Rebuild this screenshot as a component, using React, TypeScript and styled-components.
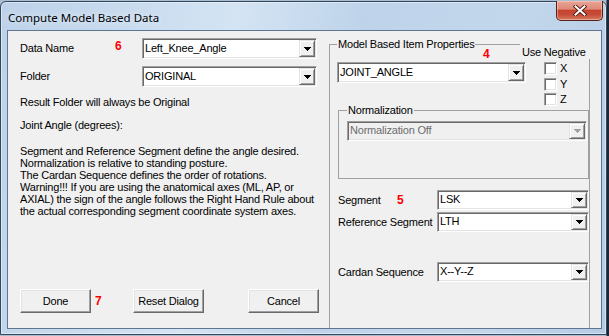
import React from 'react';
import styled, { createGlobalStyle } from 'styled-components';

const GlobalStyle = createGlobalStyle`
  html, body { margin: 0; padding: 0; }
  body {
    width: 609px;
    height: 336px;
    overflow: hidden;
    background: linear-gradient(to right, #a9bdd1 0, #a9bdd1 606px, #1b2838 607px);
    font-family: "Liberation Sans", Arial, sans-serif;
  }
  #root { width: 609px; height: 336px; }
`;

const Win = styled.div`
  position: relative;
  box-sizing: border-box;
  width: 607px;
  height: 334px;
  margin-top: 1px;
  border: 1px solid #34475c;
  border-radius: 6px 6px 0 0;
  background: linear-gradient(100deg, #bdd2e9 0%, #c7daee 18%, #d4e4f3 36%, #bed3ea 55%, #c3d7ec 78%, #b6cce5 100%);
  box-shadow: inset 0 0 0 1px rgba(255, 255, 255, 0.45);
  display: flex;
  flex-direction: column;
`;

const TitleBar = styled.div`
  height: 28px;
  flex: none;
  box-sizing: border-box;
  display: flex;
  align-items: center;
  padding: 2px 0 0 7px;
  font-family: "Noto Sans", "Open Sans", sans-serif;
  font-size: 11.5px;
  color: #000;
  text-shadow: 0 0 6px rgba(255, 255, 255, 0.9);
`;

const CloseButton = styled.div`
  position: absolute;
  top: -1px;
  right: 3px;
  width: 47px;
  height: 20px;
  box-sizing: border-box;
  border: 1px solid #5a1f16;
  border-top: none;
  border-radius: 0 0 5px 5px;
  background: linear-gradient(to bottom, #e9a596 0%, #de8a78 42%, #c7432f 50%, #c64c37 72%, #d77a62 100%);
  box-shadow: inset 0 0 0 1px rgba(255, 220, 210, 0.45);
  display: flex;
  align-items: center;
  justify-content: center;
`;

const Client = styled.div`
  flex: 1;
  min-height: 0;
  display: flex;
  margin: 0 4px 5px 6px;
  border: 1px solid #5f7690;
  background: #f0f0f0;
  overflow: hidden;
  font-size: 11px;
  letter-spacing: -0.2px;
  color: #000;
`;

const LeftPanel = styled.div`
  width: 321px;
  flex: none;
  box-sizing: border-box;
  display: flex;
  flex-direction: column;
  padding: 7px 0 15px 12px;
`;

const FieldRow = styled.div<{ $mt?: number; $ml?: number }>`
  display: flex;
  align-items: center;
  margin-top: ${(p) => p.$mt ?? 0}px;
  margin-left: ${(p) => p.$ml ?? 0}px;
`;

const Label = styled.span<{ $w: number }>`
  width: ${(p) => p.$w}px;
  flex: none;
  line-height: 13px;
  white-space: nowrap;
`;

const Num = styled.span<{ $w?: number; $mt?: number; $pl?: number }>`
  box-sizing: border-box;
  width: ${(p) => (p.$w ? `${p.$w}px` : 'auto')};
  padding-left: ${(p) => p.$pl ?? 0}px;
  flex: none;
  align-self: ${(p) => (p.$mt !== undefined ? 'flex-start' : 'center')};
  margin-top: ${(p) => p.$mt ?? 0}px;
  font-family: "Liberation Sans", Arial, sans-serif;
  font-weight: bold;
  font-size: 12px;
  line-height: 12px;
  letter-spacing: 0;
  color: #ff0000;
`;

const TextLine = styled.div<{ $mt: number }>`
  margin-top: ${(p) => p.$mt}px;
  line-height: 13px;
  white-space: nowrap;
`;

const Para = styled.div`
  margin-top: 13px;
  line-height: 12px;
  white-space: nowrap;
`;

const ButtonRow = styled.div`
  margin-top: auto;
  display: flex;
  align-items: center;
`;

const PushButton = styled.button<{ $mr?: number }>`
  box-sizing: border-box;
  width: 71px;
  height: 24px;
  margin: 0 ${(p) => p.$mr ?? 0}px 0 0;
  padding: 0 0 1px 0;
  font-family: "Liberation Sans", Arial, sans-serif;
  font-size: 11px;
  letter-spacing: -0.2px;
  color: #000;
  background: #f0f0f0;
  border: 1px solid;
  border-color: #ffffff #696969 #696969 #ffffff;
  box-shadow: inset -1px -1px 0 #a0a0a0, inset 1px 1px 0 #e3e3e3;
  border-radius: 0;
  flex: none;
`;

const RightPanel = styled.div`
  position: relative;
  flex: 1;
  display: flex;
  flex-direction: column;
  padding: 7px 11px 0 0;
`;

const Group = styled.fieldset`
  flex: 1;
  min-width: 0;
  margin: 0 0 -10px 0;
  padding: 11px 0 0 7px;
  border: 1px solid #a0a0a0;
`;

const SubGroup = styled.fieldset`
  min-width: 0;
  margin: -2px 0 0 1px;
  padding: 4px 1px 37px 8px;
  border: 1px solid #a0a0a0;
`;

const Legend = styled.legend`
  padding: 0 1px;
  line-height: 13px;
  font-size: 11px;
  white-space: nowrap;
`;

const TopRow = styled.div`
  display: flex;
  align-items: flex-start;
`;

const CheckCol = styled.div`
  margin-left: 18px;
  display: flex;
  flex-direction: column;
  gap: 2.5px;
`;

const CheckItem = styled.div`
  display: flex;
  align-items: center;
  gap: 3px;
  height: 13px;
  line-height: 13px;
`;

const CheckBox = styled.span`
  width: 13px;
  height: 13px;
  box-sizing: border-box;
  flex: none;
  border: 1px solid;
  border-color: #a0a0a0 #ffffff #ffffff #a0a0a0;
  box-shadow: inset 1px 1px 0 #696969, inset -1px -1px 0 #e3e3e3;
  background: #ffffff;
`;

const UseNegative = styled.div`
  position: absolute;
  left: 191px;
  top: 10px;
  width: 72px;
  height: 18px;
  box-sizing: border-box;
  padding: 5px 0 0 2px;
  line-height: 13px;
  background: #f0f0f0;
  white-space: nowrap;
`;

const FloatNum = styled(Num)`
  position: absolute;
  left: 154px;
  top: 17px;
`;

const ComboFrame = styled.div<{ $w?: number; $h: number; $disabled?: boolean }>`
  box-sizing: border-box;
  width: ${(p) => (p.$w ? `${p.$w}px` : '100%')};
  height: ${(p) => p.$h}px;
  flex: none;
  display: flex;
  align-items: stretch;
  border: 1px solid;
  border-color: #a0a0a0 #ffffff #ffffff #a0a0a0;
  box-shadow: inset 1px 1px 0 #696969, inset -1px -1px 0 #e3e3e3;
  padding: 1px;
  background: ${(p) => (p.$disabled ? '#f0f0f0' : '#ffffff')};
`;

const ComboText = styled.span<{ $disabled?: boolean }>`
  flex: 1;
  min-width: 0;
  display: flex;
  align-items: center;
  padding: 0 0 1px 1px;
  line-height: 13px;
  white-space: nowrap;
  overflow: hidden;
  color: ${(p) => (p.$disabled ? '#6d6d6d' : '#000000')};
`;

const DropButton = styled.span`
  width: 16px;
  flex: none;
  box-sizing: border-box;
  background: #f0f0f0;
  border: 1px solid;
  border-color: #e3e3e3 #696969 #696969 #e3e3e3;
  box-shadow: inset 1px 1px 0 #ffffff, inset -1px -1px 0 #a0a0a0;
  display: flex;
  align-items: center;
  justify-content: center;
`;

type ComboProps = { value: string; w?: number; h: number; disabled?: boolean };

function ComboBox({ value, w, h, disabled }: ComboProps) {
  return (
    <ComboFrame $w={w} $h={h} $disabled={disabled}>
      <ComboText $disabled={disabled}>{value}</ComboText>
      <DropButton>
        <svg width="7" height="4" viewBox="0 0 7 4" shapeRendering="crispEdges">
          <path
            d="M0 0h7v1h-1v1h-1v1h-1v1h-1v-1h-1v-1h-1v-1h-1z"
            fill={disabled ? '#a0a0a0' : '#000000'}
          />
        </svg>
      </DropButton>
    </ComboFrame>
  );
}

function Check({ label }: { label: string }) {
  return (
    <CheckItem>
      <CheckBox />
      <span>{label}</span>
    </CheckItem>
  );
}

export default function App() {
  return (
    <>
      <GlobalStyle />
      <Win>
        <TitleBar>Compute Model Based Data</TitleBar>
        <CloseButton>
          <svg width="14" height="11" viewBox="0 0 14 11">
            <path d="M2.5 1.5 L11.5 9.5 M11.5 1.5 L2.5 9.5" stroke="#4b1a12" strokeWidth="3.8" strokeLinecap="square" />
            <path d="M2.5 1.5 L11.5 9.5 M11.5 1.5 L2.5 9.5" stroke="#ffffff" strokeWidth="2" strokeLinecap="square" />
          </svg>
        </CloseButton>
        <Client>
          <LeftPanel>
            <FieldRow>
              <Label $w={95}>Data Name</Label>
              <Num $w={27} $mt={2}>6</Num>
              <ComboBox value="Left_Knee_Angle" w={175} h={21} />
            </FieldRow>
            <FieldRow $mt={7}>
              <Label $w={122}>Folder</Label>
              <ComboBox value="ORIGINAL" w={175} h={21} />
            </FieldRow>
            <TextLine $mt={9}>Result Folder will always be Original</TextLine>
            <TextLine $mt={10}>Joint Angle (degrees):</TextLine>
            <Para>
              Segment and Reference Segment define the angle desired.
              <br />
              Normalization is relative to standing posture.
              <br />
              The Cardan Sequence defines the order of rotations.
              <br />
              Warning!!! If you are using the anatomical axes (ML, AP, or
              <br />
              AXIAL) the sign of the angle follows the Right Hand Rule about
              <br />
              the actual corresponding segment coordinate system axes.
            </Para>
            <ButtonRow>
              <PushButton>Done</PushButton>
              <Num $w={42} $pl={4}>7</Num>
              <PushButton $mr={44}>Reset Dialog</PushButton>
              <PushButton>Cancel</PushButton>
            </ButtonRow>
          </LeftPanel>
          <RightPanel>
            <Group>
              <Legend>Model Based Item Properties</Legend>
              <TopRow>
                <ComboBox value="JOINT_ANGLE" w={189} h={21} />
                <CheckCol>
                  <Check label="X" />
                  <Check label="Y" />
                  <Check label="Z" />
                </CheckCol>
              </TopRow>
              <SubGroup>
                <Legend>Normalization</Legend>
                <ComboBox value="Normalization Off" h={20} disabled />
              </SubGroup>
              <FieldRow $mt={11} $ml={1}>
                <Label $w={59}>Segment</Label>
                <Num $w={40}>5</Num>
                <ComboBox value="LSK" w={152} h={20} />
              </FieldRow>
              <FieldRow $mt={2} $ml={1}>
                <Label $w={99}>Reference Segment</Label>
                <ComboBox value="LTH" w={152} h={20} />
              </FieldRow>
              <FieldRow $mt={30} $ml={1}>
                <Label $w={99}>Cardan Sequence</Label>
                <ComboBox value="X--Y--Z" w={152} h={20} />
              </FieldRow>
            </Group>
            <UseNegative>Use Negative</UseNegative>
            <FloatNum>4</FloatNum>
          </RightPanel>
        </Client>
      </Win>
    </>
  );
}
